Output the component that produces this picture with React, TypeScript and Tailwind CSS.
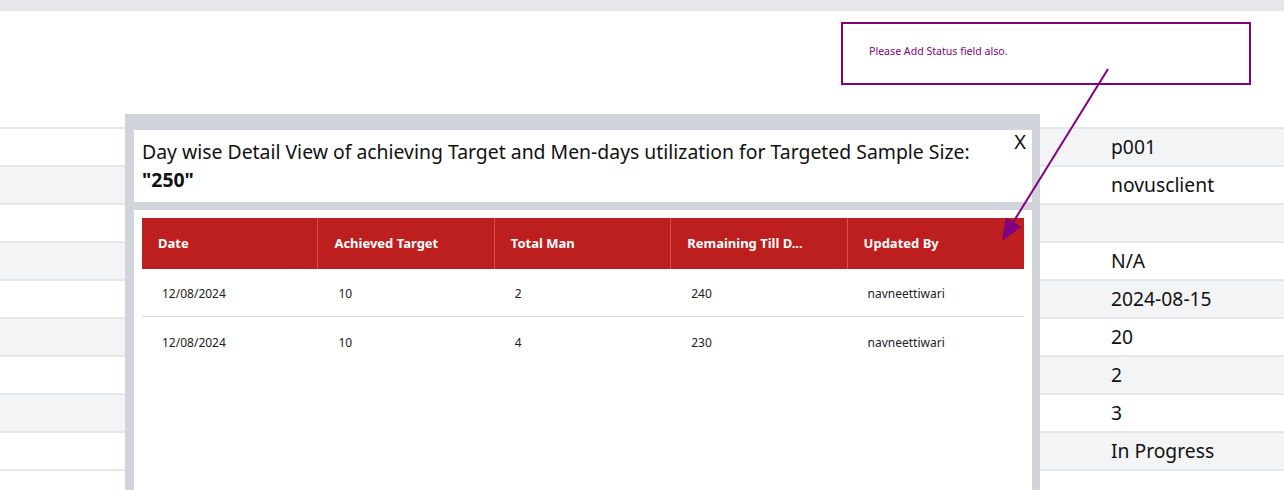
import React from "react";

const font = { fontFamily: '"Noto Sans", "Open Sans", sans-serif' };

const values = ["p001", "novusclient", "", "N/A", "2024-08-15", "20", "2", "3", "In Progress"];
const headers = ["Date", "Achieved Target", "Total Man", "Remaining Till D...", "Updated By"];
const rows = [
  ["12/08/2024", "10", "2", "240", "navneettiwari"],
  ["12/08/2024", "10", "4", "230", "navneettiwari"],
];

export default function App() {
  return (
    <div className="relative w-[1284px] h-[490px] overflow-hidden bg-white" style={font}>
      <div className="h-[11px] bg-[#e5e7eb]" />
      <div className="mt-[116px]">
        {values.map((v, i) => (
          <div key={i} className="flex h-[38px] border-t-2 border-[#e5e7eb]">
            <div className={`w-[900px] ${i % 2 === 0 ? "bg-white" : "bg-[#f3f4f6]"}`} />
            <div
              className={`flex-1 flex items-center pl-[211px] text-[19.3px] text-[#111] ${
                i % 2 === 0 ? "bg-[#f3f4f6]" : "bg-white"
              }`}
            >
              {v}
            </div>
          </div>
        ))}
        <div className="border-t-2 border-[#e5e7eb]" />
      </div>

      {/* annotation */}
      <div className="absolute left-[841px] top-[22px] w-[410px] h-[63px] border-2 border-[#800080] pl-[26px] pt-[19px] text-[10.6px] leading-[16px] text-[#800080]">
        Please Add Status field also.
      </div>

      {/* modal */}
      <div className="absolute left-[125px] top-[114px] w-[915px] h-[380px] bg-[#d1d5db] pl-[9px] pr-[8px] pt-[16px]">
        <div className="relative bg-white h-[72px] px-2 pt-2 text-[19.4px] leading-[28px] text-[#111]">
          <div>Day wise Detail View of achieving Target and Men-days utilization for Targeted Sample Size:</div>
          <div className="font-bold">"250"</div>
          <div className="absolute right-[6px] top-0 text-[20px] leading-[24px]">X</div>
        </div>
        <div className="mt-2 bg-white h-[300px] p-2">
          <div className="grid grid-cols-5 h-[51px] bg-[#bd1e1e] text-white text-[13px] font-bold">
            {headers.map((h, i) => (
              <div
                key={h}
                className={`flex items-center pl-4 pt-[1px] ${i < 4 ? "border-r border-[#d45050]" : ""}`}
              >
                {h}
              </div>
            ))}
          </div>
          {rows.map((r, ri) => (
            <div
              key={ri}
              className={`grid grid-cols-5 h-[48px] text-[12px] text-[#222] ${
                ri === 0 ? "border-b border-[#dddddd]" : ""
              }`}
            >
              {r.map((c, ci) => (
                <div key={ci} className="flex items-center pl-5 pt-[3px]">
                  {c}
                </div>
              ))}
            </div>
          ))}
        </div>
      </div>

      {/* arrow */}
      <svg className="absolute left-0 top-0 pointer-events-none" width="1284" height="490">
        <line x1="1108" y1="69" x2="1012" y2="224" stroke="#800080" strokeWidth="2" />
        <polygon points="1002,241 1021,227 1006,217.5" fill="#800080" />
      </svg>
    </div>
  );
}
